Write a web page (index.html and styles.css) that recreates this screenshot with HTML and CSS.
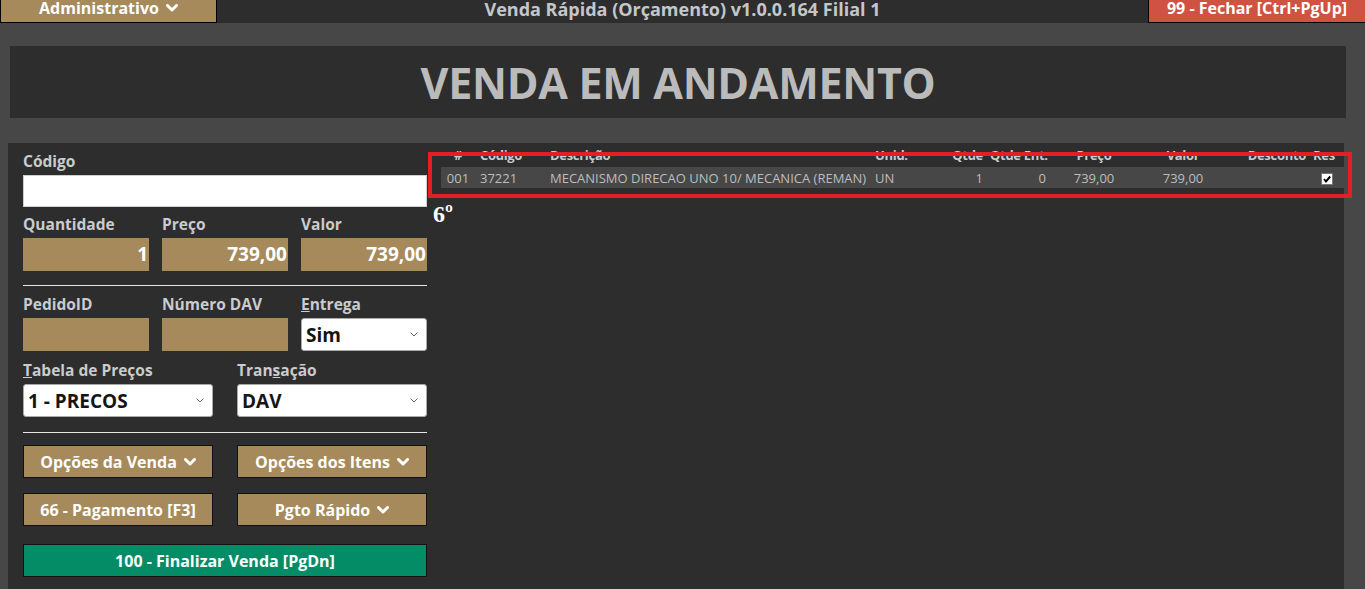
FILE: index.html
```html
<!DOCTYPE html>
<html lang="pt-BR">
<head>
  <meta charset="UTF-8" />
  <title>Venda Rápida (Orçamento)</title>
  <link rel="stylesheet" href="styles.css">
</head>
<body>
  <header class="topbar">
    <div class="btn btn-admin">Administrativo
      <svg class="chev" viewBox="0 0 12 8"><polyline points="1.5,1.5 6,6 10.5,1.5"/></svg>
    </div>
    <div class="app-title">Venda Rápida (Orçamento) v1.0.0.164 Filial 1</div>
    <div class="btn btn-close">99 - Fechar [Ctrl+PgUp]</div>
  </header>

  <main class="page">
    <h1 class="status">VENDA EM ANDAMENTO</h1>

    <section class="panel">
      <div class="sale-form">
        <div class="field">
          <label>Código</label>
          <div class="input input-code"></div>
        </div>

        <div class="row row-3">
          <div class="field">
            <label>Quantidade</label>
            <div class="input input-gold">1</div>
          </div>
          <div class="field">
            <label>Preço</label>
            <div class="input input-gold">739,00</div>
          </div>
          <div class="field">
            <label>Valor</label>
            <div class="input input-gold">739,00</div>
          </div>
        </div>

        <hr class="sep">

        <div class="row row-3">
          <div class="field">
            <label>PedidoID</label>
            <div class="input input-gold"></div>
          </div>
          <div class="field">
            <label>Número DAV</label>
            <div class="input input-gold"></div>
          </div>
          <div class="field">
            <label><u>E</u>ntrega</label>
            <div class="select">Sim
              <svg class="caret" viewBox="0 0 8 5"><polyline points="0.5,0.5 4,4 7.5,0.5"/></svg>
            </div>
          </div>
        </div>

        <div class="row row-2 gap-top">
          <div class="field">
            <label><u>T</u>abela de Preços</label>
            <div class="select">1 - PRECOS
              <svg class="caret" viewBox="0 0 8 5"><polyline points="0.5,0.5 4,4 7.5,0.5"/></svg>
            </div>
          </div>
          <div class="field">
            <label>Tran<u>s</u>ação</label>
            <div class="select">DAV
              <svg class="caret" viewBox="0 0 8 5"><polyline points="0.5,0.5 4,4 7.5,0.5"/></svg>
            </div>
          </div>
        </div>

        <hr class="sep sep-low">

        <div class="row row-2 actions">
          <div class="btn action">Opções da Venda
            <svg class="chev" viewBox="0 0 12 8"><polyline points="1.5,1.5 6,6 10.5,1.5"/></svg>
          </div>
          <div class="btn action">Opções dos Itens
            <svg class="chev" viewBox="0 0 12 8"><polyline points="1.5,1.5 6,6 10.5,1.5"/></svg>
          </div>
        </div>

        <div class="row row-2 actions">
          <div class="btn action">66 - Pagamento [F3]</div>
          <div class="btn action">Pgto Rápido
            <svg class="chev" viewBox="0 0 12 8"><polyline points="1.5,1.5 6,6 10.5,1.5"/></svg>
          </div>
        </div>

        <div class="btn action action-finish">100 - Finalizar Venda [PgDn]</div>
      </div>

      <div class="items">
        <table class="grid">
          <colgroup>
            <col style="width:34px"><col style="width:70px"><col style="width:325px">
            <col style="width:65px"><col style="width:50px"><col style="width:63px">
            <col style="width:92px"><col style="width:86px"><col style="width:82px">
            <col style="width:36px">
          </colgroup>
          <thead>
            <tr>
              <th class="c">#</th>
              <th>Código</th>
              <th>Descrição</th>
              <th>Unid.</th>
              <th class="r">Qtde</th>
              <th class="r">Qtde Ent.</th>
              <th class="c">Preço</th>
              <th class="c">Valor</th>
              <th class="r">Desconto</th>
              <th>Res</th>
            </tr>
          </thead>
          <tbody>
            <tr>
              <td class="c">001</td>
              <td>37221</td>
              <td>MECANISMO DIRECAO UNO 10/ MECANICA (REMAN)</td>
              <td>UN</td>
              <td class="r">1</td>
              <td class="r">0</td>
              <td class="c">739,00</td>
              <td class="c">739,00</td>
              <td class="r"></td>
              <td class="c">
                <span class="check"><svg viewBox="0 0 10 10"><polyline points="2,5 4,7.5 8.2,2.5"/></svg></span>
              </td>
            </tr>
          </tbody>
        </table>
      </div>

      <!-- marcação sobre a grade -->
      <div class="highlight"></div>
      <span class="step">6º</span>
    </section>
  </main>
</body>
</html>
```

FILE: styles.css
```css
:root {
  --bg-color: #474747;
  --panel-color: #2d2d2d;
  --gold: #a68a5b;
  --label-color: #c9cbcd;
}

body {
  margin: 0;
  background: var(--bg-color);
  font-family: 'Open Sans', 'Noto Sans', sans-serif;
  height: 589px;
  overflow: hidden;
}

/* Top bar */
.topbar {
  display: grid;
  grid-template-columns: 217px 1fr 217px;
  height: 23px;
  overflow: hidden;
  background: var(--panel-color);
}

.btn {
  box-sizing: border-box;
  display: flex;
  align-items: center;
  justify-content: center;
  gap: 7px;
  color: #fff;
  font-size: 16px;
  font-weight: 700;
  border: 1px solid #000;
}

.chev {
  width: 12px;
  height: 8px;
  fill: none;
  stroke: #fff;
  stroke-width: 3;
  stroke-linecap: round;
  stroke-linejoin: round;
}

.btn-admin,
.btn-close {
  height: 23px;
  line-height: 16px;
  border-top: 0;
  padding-bottom: 7px;
}

.btn-admin {
  background: var(--gold);
}

.btn-close {
  background: #d05242;
  border-right: 0;
}

.app-title {
  text-align: center;
  color: #c3c7cb;
  font-size: 18px;
  font-weight: 700;
  line-height: 18px;
}

/* Page */
.page {
  padding: 23px 21px 0 8px;
}

.status {
  margin: 0 -2px 25px 2px;
  height: 72px;
  background: var(--panel-color);
  color: #bbb;
  font-size: 43px;
  font-weight: 700;
  line-height: 74px;
  text-align: center;
  letter-spacing: -0.3px;
}

.panel {
  position: relative;
  display: flex;
  gap: 14px;
  height: 446px;
  padding-left: 15px;
  background: var(--panel-color);
}

/* Form */
.sale-form {
  width: 404px;
  flex: none;
  padding-top: 8px;
  display: flex;
  flex-direction: column;
}

.field label {
  display: block;
  height: 20px;
  line-height: 20px;
  margin-bottom: 4px;
  color: var(--label-color);
  font-size: 15.5px;
  font-weight: 700;
}

.input {
  box-sizing: border-box;
  height: 33px;
  line-height: 33px;
  font-size: 19px;
  font-weight: 700;
  color: #fff;
  text-align: right;
  padding-right: 1px;
}

.input-code {
  height: 32px;
  background: #fff;
  border: 1px solid #cfcfcf;
}

.input-gold {
  background: var(--gold);
}

.row {
  display: grid;
  margin-top: 7px;
}

.row-3 {
  grid-template-columns: repeat(3, 1fr);
  gap: 13px;
}

.row-2 {
  grid-template-columns: 1fr 1fr;
  gap: 24px;
}

.gap-top {
  margin-top: 9px;
}

.sep {
  border: 0;
  border-top: 1px solid #e6e6e6;
  margin: 14px 0 0;
}

.sep + .row {
  margin-top: 8px;
}

.sep-low {
  margin-top: 15px;
}

.select {
  box-sizing: border-box;
  height: 33px;
  display: flex;
  align-items: center;
  justify-content: space-between;
  padding: 0 8px 0 4px;
  background: #fff;
  border: 1px solid #aaa;
  border-radius: 3px;
  color: #151515;
  font-size: 19px;
  font-weight: 700;
}

.caret {
  width: 8px;
  height: 5px;
  fill: none;
  stroke: #666;
  stroke-width: 1;
}

.sep + .actions {
  margin-top: 12px;
}

.actions + .actions {
  margin-top: 15px;
}

.action {
  height: 33px;
  background: var(--gold);
  border-color: #111;
}

.action-finish {
  margin-top: 18px;
  background: #038c65;
}

/* Items grid */
.items {
  flex: 1;
}

.grid {
  width: 903px;
  table-layout: fixed;
  border-collapse: collapse;
  font-size: 13px;
}

.grid th,
.grid td {
  padding: 0 2px 0 5px;
  text-align: left;
  white-space: nowrap;
  overflow: hidden;
}

.grid th {
  height: 23px;
  color: #c9cbcd;
  font-weight: 700;
  line-height: 23px;
  padding-top: 1px;
  letter-spacing: -0.3px;
}

.grid td {
  height: 21px;
  background: #474747;
  color: #bdbdbd;
}

.grid .c { text-align: center; padding: 0; }
.grid .r { text-align: right; padding-right: 2px; }

.check {
  display: inline-block;
  width: 10px;
  height: 10px;
  background: #fff;
  border: 1px solid #777;
  vertical-align: middle;
  margin-left: 2px;
}

.check svg {
  display: block;
  width: 10px;
  height: 10px;
  fill: none;
  stroke: #000;
  stroke-width: 2;
}

/* Overlay marking */
.highlight {
  position: absolute;
  left: 420px;
  top: 9px;
  width: 924px;
  height: 46px;
  box-sizing: border-box;
  border: 4px solid #e31e24;
  pointer-events: none;
}

.step {
  position: absolute;
  left: 425px;
  top: 58px;
  color: #fff;
  font-family: 'Liberation Serif', serif;
  font-size: 24px;
  font-weight: 700;
  line-height: 26px;
}
```
